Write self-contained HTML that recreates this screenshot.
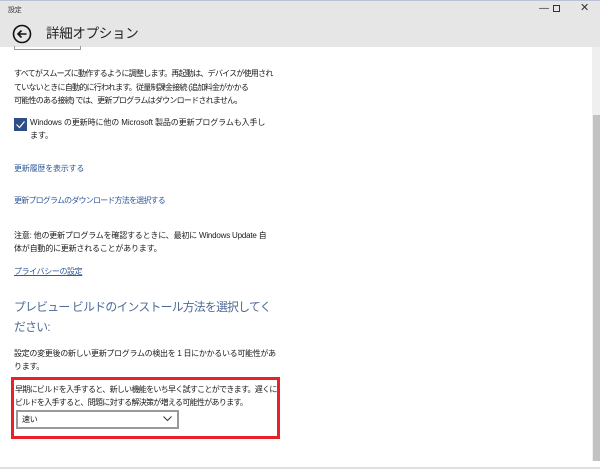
<!DOCTYPE html>
<html><head><meta charset="utf-8"><style>
*{margin:0;padding:0;box-sizing:border-box}
body{width:600px;height:469px;overflow:hidden;background:#fff;font-family:"Liberation Sans","Noto Sans CJK JP",sans-serif;color:#1a1a1a;position:relative}
.a{position:absolute;white-space:nowrap;font-size:8px;line-height:13px;letter-spacing:-0.2px}
.l{color:#2f5a98}
.hdr{position:absolute;left:0;top:0;width:600px;height:47px;background:#e6e6e6;border-top:1px solid #b8c4d6}
</style></head><body>
<div class="hdr"></div>
<div class="a" style="left:8px;top:4px;font-size:7px;color:#333">設定</div>
<div class="a" style="left:539px;top:2px;font-size:10px;color:#333">—</div>
<div style="position:absolute;left:553px;top:5px;width:7px;height:7px;border:1px solid #333"></div>
<div class="a" style="left:580px;top:2px;font-size:11px;color:#333">✕</div>
<svg style="position:absolute;left:12px;top:24px" width="20" height="20" viewBox="0 0 20 20"><circle cx="10" cy="10" r="8.5" fill="none" stroke="#111" stroke-width="1.6"/><path d="M14.5 10H6M9.5 6.5L6 10l3.5 3.5" fill="none" stroke="#111" stroke-width="1.6"/></svg>
<div class="a" style="left:46px;top:24px;font-size:13.5px;line-height:20px;color:#222;letter-spacing:-0.3px">詳細オプション</div>
<div style="position:absolute;left:14px;top:46px;width:67px;height:4px;border:1px solid #999;border-top:none"></div>
<div style="position:absolute;left:592px;top:47px;width:8px;height:414px;background:#efefef"></div>
<div style="position:absolute;left:593px;top:115px;width:7px;height:346px;background:#c2c2c2"></div>
<div style="position:absolute;left:0;top:467px;width:600px;height:2px;background:#e0e0e0"></div>
<div class="a" style="left:14px;top:67px;line-height:13.5px;letter-spacing:-0.75px">すべてがスムーズに動作するように調整します。再起動は、デバイスが使用され<br>ていないときに自動的に行われます。従量制課金接続 (追加料金がかかる<br>可能性のある接続) では、更新プログラムはダウンロードされません。</div>
<div style="position:absolute;left:14px;top:118px;width:13px;height:13px;background:#2b4f86"><svg width="13" height="13"><path d="M2.5 6.5l3 3 5-6" fill="none" stroke="#fff" stroke-width="1.2"/></svg></div>
<div class="a" style="left:30px;top:117px;line-height:12.5px;letter-spacing:-0.1px">Windows の更新時に他の Microsoft 製品の更新プログラムも入手し<br>ます。</div>
<div class="a l" style="left:14px;top:162px">更新履歴を表示する</div>
<div class="a l" style="left:14px;top:194px;letter-spacing:-0.8px">更新プログラムのダウンロード方法を選択する</div>
<div class="a" style="left:14px;top:229px;letter-spacing:-0.2px">注意: 他の更新プログラムを確認するときに、最初に Windows Update 自<br>体が自動的に更新されることがあります。</div>
<div class="a l" style="left:14px;top:265px;text-decoration:underline;letter-spacing:-0.4px">プライバシーの設定</div>
<div class="a" style="left:14px;top:297px;font-size:11.8px;line-height:20px;color:#4d6a96;letter-spacing:-0.7px">プレビュー ビルドのインストール方法を選択してく<br>ださい:</div>
<div class="a" style="left:14px;top:347px;letter-spacing:-0.3px">設定の変更後の新しい更新プログラムの検出を 1 日にかかるいる可能性があ<br>ります。</div>
<div style="position:absolute;left:11px;top:377px;width:269px;height:62px;border:3px solid #e8202a"></div>
<div class="a" style="left:15px;top:383px;letter-spacing:-0.7px">早期にビルドを入手すると、新しい機能をいち早く試すことができます。遅くに<br>ビルドを入手すると、問題に対する解決策が増える可能性があります。</div>
<div style="position:absolute;left:16px;top:410px;width:163px;height:19px;border:2px solid #999;background:#fff"></div>
<div class="a" style="left:22px;top:413px">速い</div>
<svg style="position:absolute;left:163px;top:416px" width="9" height="6"><path d="M.5 .5l4 4 4-4" fill="none" stroke="#333" stroke-width="1"/></svg>
</body></html>
